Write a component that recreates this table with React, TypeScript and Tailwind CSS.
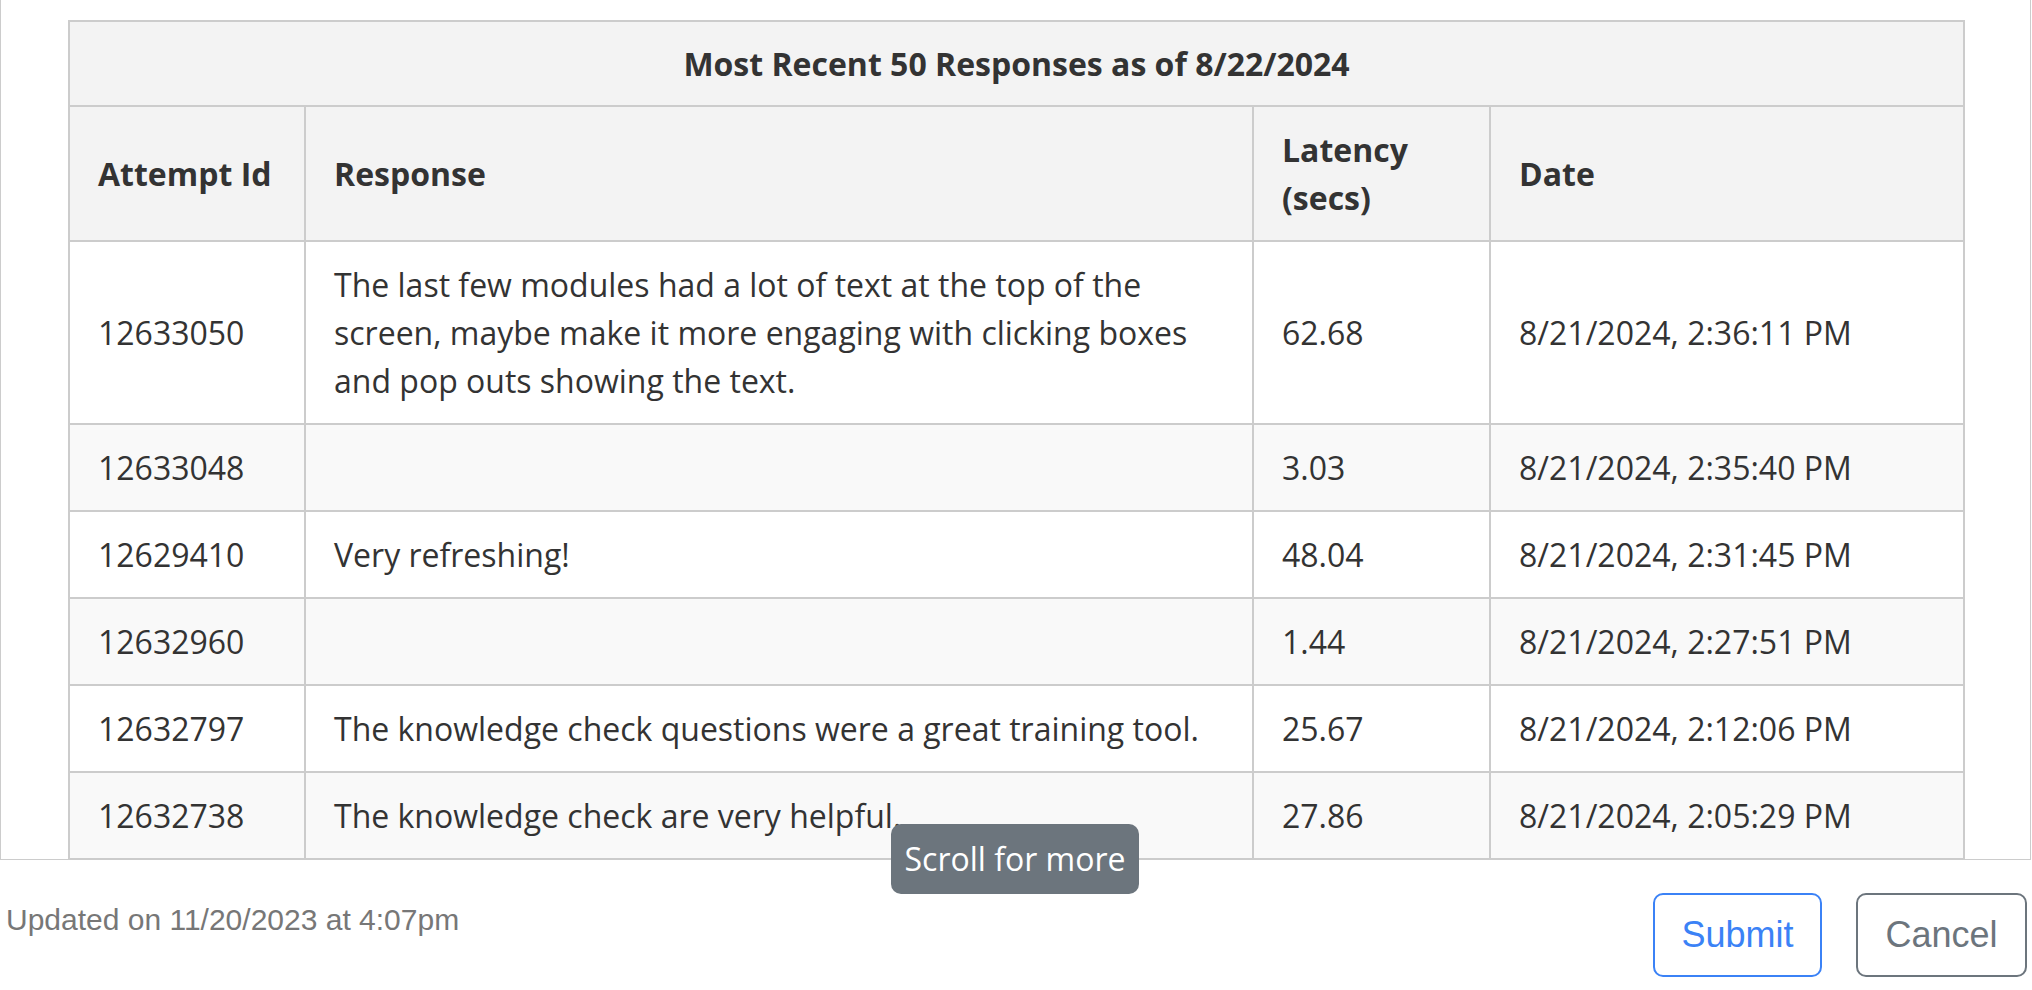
import React from "react";

const rows = [
  { id: "12633050", resp: "The last few modules had a lot of text at the top of the screen, maybe make it more engaging with clicking boxes and pop outs showing the text.", lat: "62.68", date: "8/21/2024, 2:36:11 PM" },
  { id: "12633048", resp: "", lat: "3.03", date: "8/21/2024, 2:35:40 PM" },
  { id: "12629410", resp: "Very refreshing!", lat: "48.04", date: "8/21/2024, 2:31:45 PM" },
  { id: "12632960", resp: "", lat: "1.44", date: "8/21/2024, 2:27:51 PM" },
  { id: "12632797", resp: "The knowledge check questions were a great training tool.", lat: "25.67", date: "8/21/2024, 2:12:06 PM" },
  { id: "12632738", resp: "The knowledge check are very helpful.", lat: "27.86", date: "8/21/2024, 2:05:29 PM" },
];

const cell = "border-2 border-[#cccccc] px-[28px] py-[18.5px] align-middle text-left";

export default function App() {
  return (
    <div className="relative w-[2032px] h-[990px] bg-white overflow-hidden">
      <div className="w-[2031px] h-[860px] border-l border-r border-b border-[#cccccc] overflow-hidden pl-[67px] pt-[20px]">
        <table
          className="table-fixed border-collapse w-[1895px] text-[#333333] text-[32px] leading-[48px]"
          style={{ fontFamily: '"Open Sans", sans-serif' }}
        >
          <colgroup>
            <col className="w-[236px]" />
            <col className="w-[948px]" />
            <col className="w-[237px]" />
            <col className="w-[474px]" />
          </colgroup>
          <thead>
            <tr className="bg-[#f3f3f3]">
              <th colSpan={4} className="border-2 border-[#cccccc] py-[17.5px] text-center font-bold">
                Most Recent 50 Responses as of 8/22/2024
              </th>
            </tr>
            <tr className="bg-[#f3f3f3]">
              <th className={cell + " font-bold"}>Attempt Id</th>
              <th className={cell + " font-bold"}>Response</th>
              <th className={cell + " font-bold"}>Latency (secs)</th>
              <th className={cell + " font-bold"}>Date</th>
            </tr>
          </thead>
          <tbody>
            {rows.map((r, i) => (
              <tr key={r.id} className={i % 2 === 1 ? "bg-[#f9f9f9]" : "bg-white"}>
                <td className={cell}>{r.id}</td>
                <td className={cell}>{r.resp}</td>
                <td className={cell}>{r.lat}</td>
                <td className={cell}>{r.date}</td>
              </tr>
            ))}
          </tbody>
        </table>
      </div>

      <div
        className="absolute left-[891px] top-[824px] w-[248px] h-[70px] rounded-[10px] bg-[#6c757d] text-white text-[32px] flex items-center justify-center"
        style={{ fontFamily: '"Open Sans", sans-serif' }}
      >
        Scroll for more
      </div>

      <div className="flex justify-between items-start pl-[6px] pr-[5px]" style={{ fontFamily: '"Liberation Sans", Arial, sans-serif' }}>
        <span className="mt-[43px] text-[30px] leading-[34px] text-[#777777]">Updated on 11/20/2023 at 4:07pm</span>
        <div className="flex gap-[34px] mt-[33px]">
          <button className="w-[169px] h-[84px] border-2 border-[#3b82f6] rounded-[10px] text-[36px] text-[#3b82f6] bg-white">
            Submit
          </button>
          <button className="w-[171px] h-[84px] border-2 border-[#6c757d] rounded-[10px] text-[36px] text-[#6c757d] bg-white">
            Cancel
          </button>
        </div>
      </div>
    </div>
  );
}
